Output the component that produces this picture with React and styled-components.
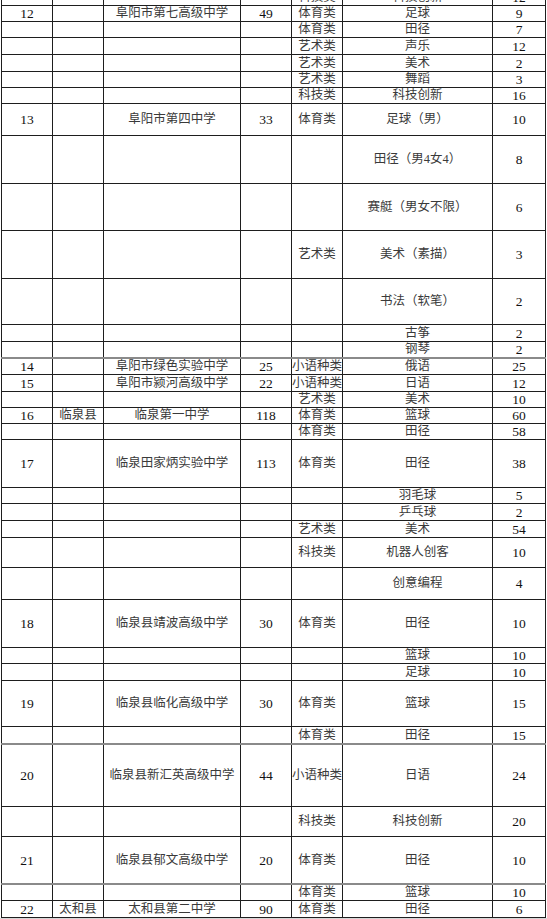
import React from 'react';
import styled, { createGlobalStyle } from 'styled-components';

const GlobalStyle = createGlobalStyle`
  html, body {
    margin: 0;
    padding: 0;
    background: #d6d6d6;
    height: 919px;
    overflow: hidden;
  }
`;

const Sheet = styled.div`
  background: #fff;
  padding-left: 1px;
  overflow: hidden;
`;

const Table = styled.table`
  border-collapse: collapse;
  table-layout: fixed;
  width: 545px;
  margin-top: -11px;
  font-family: 'Liberation Serif', 'Noto Sans CJK SC', serif;
  color: #333;
`;

const Row = styled.tr`
  height: ${(p) => p.h}px;
  & > td {
    border-top: ${(p) => (p.heavy ? '2px solid #8a8a8a' : '1px solid #1e1e1e')};
  }
`;

const Cell = styled.td`
  border: 1px solid #1e1e1e;
  padding: ${(p) => (p.num ? '1px 0 0' : '0')};
  text-align: center;
  vertical-align: middle;
  line-height: 1;
  white-space: nowrap;
  overflow: hidden;
  font-size: ${(p) => (p.num ? '13.5px' : '12.5px')};
  color: ${(p) => (p.num ? '#111' : '#3a3a3a')};
`;

const widths = [51, 51, 137, 51, 51, 150, 53];

// [no, county, school, count, category, item, quota, height, heavy]
const rows = [
  ['', '', '', '', '科技类', '科技创新', '12', 16],
  ['12', '', '阜阳市第七高级中学', '49', '体育类', '足球', '9', 16],
  ['', '', '', '', '体育类', '田径', '7', 16],
  ['', '', '', '', '艺术类', '声乐', '12', 17],
  ['', '', '', '', '艺术类', '美术', '2', 17],
  ['', '', '', '', '艺术类', '舞蹈', '3', 16],
  ['', '', '', '', '科技类', '科技创新', '16', 16],
  ['13', '', '阜阳市第四中学', '33', '体育类', '足球（男）', '10', 32],
  ['', '', '', '', '', '田径（男4女4）', '8', 48],
  ['', '', '', '', '', '赛艇（男女不限）', '6', 47],
  ['', '', '', '', '艺术类', '美术（素描）', '3', 48],
  ['', '', '', '', '', '书法（软笔）', '2', 46],
  ['', '', '', '', '', '古筝', '2', 17],
  ['', '', '', '', '', '钢琴', '2', 16],
  ['14', '', '阜阳市绿色实验中学', '25', '小语种类', '俄语', '25', 17, true],
  ['15', '', '阜阳市颍河高级中学', '22', '小语种类', '日语', '12', 17],
  ['', '', '', '', '艺术类', '美术', '10', 16],
  ['16', '临泉县', '临泉第一中学', '118', '体育类', '篮球', '60', 16],
  ['', '', '', '', '体育类', '田径', '58', 16],
  ['17', '', '临泉田家炳实验中学', '113', '体育类', '田径', '38', 48],
  ['', '', '', '', '', '羽毛球', '5', 16],
  ['', '', '', '', '', '乒乓球', '2', 17],
  ['', '', '', '', '艺术类', '美术', '54', 17],
  ['', '', '', '', '科技类', '机器人创客', '10', 30],
  ['', '', '', '', '', '创意编程', '4', 32],
  ['18', '', '临泉县靖波高级中学', '30', '体育类', '田径', '10', 48],
  ['', '', '', '', '', '篮球', '10', 16],
  ['', '', '', '', '', '足球', '10', 17],
  ['19', '', '临泉县临化高级中学', '30', '体育类', '篮球', '15', 46],
  ['', '', '', '', '体育类', '田径', '15', 17],
  ['20', '', '临泉县新汇英高级中学', '44', '小语种类', '日语', '24', 63, true],
  ['', '', '', '', '科技类', '科技创新', '20', 30],
  ['21', '', '临泉县郁文高级中学', '20', '体育类', '田径', '10', 47],
  ['', '', '', '', '体育类', '篮球', '10', 17, true],
  ['22', '太和县', '太和县第二中学', '90', '体育类', '田径', '6', 17],
];

const isNum = (v) => /^\d+$/.test(v);

export default function App() {
  return (
    <>
      <GlobalStyle />
      <Sheet>
        <Table>
          <colgroup>
            {widths.map((w, i) => (
              <col key={i} style={{ width: w }} />
            ))}
          </colgroup>
          <tbody>
            {rows.map((r, i) => (
              <Row key={i} h={r[7]} heavy={r[8]}>
                {r.slice(0, 7).map((c, j) => (
                  <Cell key={j} num={isNum(c)}>
                    {c}
                  </Cell>
                ))}
              </Row>
            ))}
          </tbody>
        </Table>
      </Sheet>
    </>
  );
}
